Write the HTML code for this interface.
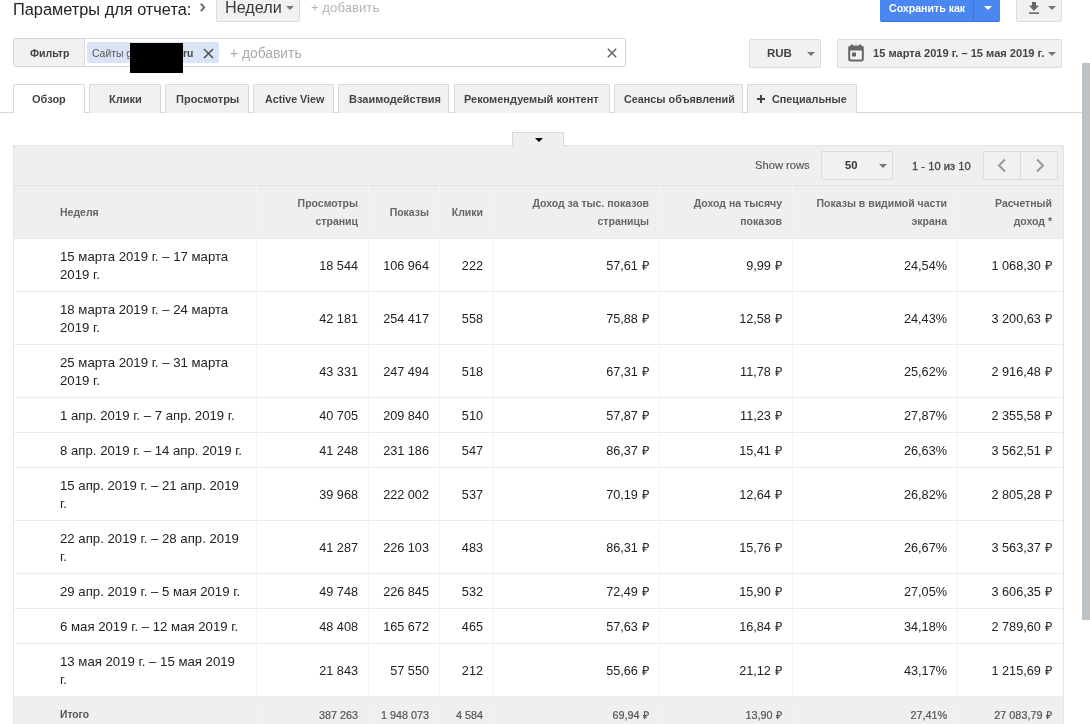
<!DOCTYPE html>
<html><head><meta charset="utf-8">
<style>
*{box-sizing:border-box;margin:0;padding:0}
html,body{width:1090px;height:724px;overflow:hidden;background:#fff;font-family:"Liberation Sans",sans-serif;color:#222;position:relative}
body{-webkit-font-smoothing:antialiased}
.t,table,.tab span{will-change:transform}
.a{position:absolute;white-space:nowrap}
.t{position:absolute;white-space:nowrap;line-height:1}
.btn{position:absolute;background:#f1f1f1;border:1px solid #dcdcdc;border-radius:2px}
.tab{position:absolute;top:84px;height:29px;background:#f1f1f1;border:1px solid #d9d9d9;border-bottom:none;border-radius:2px 2px 0 0}
.tab.on{background:#fff}
.tab span{position:absolute;top:9px;line-height:1;font-weight:bold;font-size:11px;color:#444;white-space:nowrap}
.tri{position:absolute;width:0;height:0;border-left:4px solid transparent;border-right:4px solid transparent;border-top:4px solid #777}
table{border-collapse:collapse;position:absolute;left:13px;top:185px;width:1050px;table-layout:fixed}
td,th{border:1px solid #f3f3f3;border-top-color:#ececec;border-bottom-color:#ececec;text-align:right;padding:0 10px;vertical-align:middle;white-space:nowrap}
tr>*:first-child{border-left-color:#e3e3e3}
tr>*:last-child{border-right-color:#e3e3e3;padding-right:11px}
th{background:#efefef;font-weight:bold;font-size:10.5px;color:#666;line-height:18px}
td{line-height:18px;color:#222;font-size:12.7px;padding-top:2px}
tr.tot td{padding-top:0;padding-bottom:0;-webkit-text-stroke:0.2px #555}
th{border-top-color:#e3e3e3}
td.w{text-align:left;padding-left:46px;font-size:13.2px}
tr.tot td{background:#efefef;font-size:10.8px;color:#555}
tr.tot td.w{font-weight:bold;font-size:10.3px;-webkit-text-stroke:0}
</style></head><body>
<!-- header row -->
<div class="t" style="left:13px;top:1px;font-size:16.35px;color:#222">Параметры для отчета:</div>
<svg class="a" style="left:199px;top:3px" width="8" height="10" viewBox="0 0 8 10"><path d="M1.8 0.6 L5.2 4.4 L1.8 8.2" fill="none" stroke="#6a6a6a" stroke-width="1.9"/></svg>
<div class="btn" style="left:216px;top:-3px;width:84px;height:25px"></div>
<div class="t" style="left:225px;top:-1px;font-size:16.2px;color:#3a3a3a">Недели</div>
<div class="tri" style="left:286px;top:6px;border-top-color:#777;border-left-width:4px;border-right-width:4px;border-top-width:4px"></div>
<div class="t" style="left:311px;top:1px;font-size:13.2px;color:#b5b5b5">+ добавить</div>
<div class="a" style="left:880px;top:-3px;width:120px;height:25px;background:#4a87f1;border-radius:2px;border-bottom:1px solid #3b70ec"></div>
<div class="a" style="left:973px;top:-3px;width:1px;height:25px;background:#3a6fee"></div>
<div class="t" style="left:889px;top:3px;font-size:10.6px;font-weight:bold;color:#fff">Сохранить как</div>
<div class="tri" style="left:984px;top:6px;border-top-color:#fff"></div>
<div class="btn" style="left:1016px;top:-3px;width:46px;height:25px"></div>
<svg class="a" style="left:1028px;top:2px" width="12" height="13" viewBox="0 0 12 13"><path d="M4 -1 H8 V3.5 H11 L6 9 L1 3.5 H4 Z" fill="#666"/><rect x="1" y="10.3" width="10" height="1.6" fill="#666"/></svg>
<div class="tri" style="left:1048px;top:6px;border-top-color:#777"></div>
<!-- filter bar -->
<div class="a" style="left:13px;top:38px;width:613px;height:29px;background:#fff;border:1px solid #d6d6d6;border-radius:2px"></div>
<div class="a" style="left:14px;top:39px;width:71px;height:27px;background:#f1f1f1;border-right:1px solid #dadada"></div>
<div class="t" style="left:30px;top:48px;font-size:10.6px;font-weight:bold;color:#444">Фильтр</div>
<div class="a" style="left:87px;top:42px;width:132px;height:21px;background:#dae4f7;border-radius:2px"></div>
<div class="t" style="left:92px;top:49px;font-size:10.4px;color:#555">Сайты g</div>
<div class="t" style="left:183px;top:49px;font-size:10.4px;font-weight:bold;color:#444">ru</div>
<svg class="a" style="left:203px;top:48px" width="11" height="11" viewBox="0 0 11 11"><path d="M1 1 L10 10 M10 1 L1 10" stroke="#555" stroke-width="1.6"/></svg>
<div class="a" style="left:130px;top:43px;width:53px;height:30px;background:#000"></div>
<div class="t" style="left:230px;top:47px;font-size:13.85px;color:#aaa">+ добавить</div>
<svg class="a" style="left:607px;top:48px" width="10" height="10" viewBox="0 0 10 10"><path d="M0.8 0.8 L9.2 9.2 M9.2 0.8 L0.8 9.2" stroke="#666" stroke-width="1.5"/></svg>
<div class="btn" style="left:749px;top:39px;width:72px;height:29px"></div>
<div class="t" style="left:767px;top:48px;font-size:11.5px;font-weight:bold;color:#444">RUB</div>
<div class="tri" style="left:807px;top:52px"></div>
<div class="btn" style="left:837px;top:39px;width:225px;height:29px"></div>
<svg class="a" style="left:848px;top:44px" width="16" height="18" viewBox="0 0 16 18"><rect x="3" y="0.5" width="2" height="3" fill="#666"/><rect x="11" y="0.5" width="2" height="3" fill="#666"/><rect x="1.2" y="2.5" width="13.6" height="14" rx="1.5" fill="none" stroke="#666" stroke-width="2"/><rect x="1.2" y="2.5" width="13.6" height="4" fill="#666"/><rect x="4" y="8.5" width="4" height="4" fill="#666"/></svg>
<div class="t" style="left:873px;top:48px;font-size:11.1px;font-weight:bold;color:#444">15 марта 2019 г. – 15 мая 2019 г.</div>
<div class="tri" style="left:1048px;top:52px"></div>
<!-- tabs -->
<div class="a" style="left:0;top:112px;width:1082px;height:1px;background:#d9d9d9"></div>
<div class="tab on" style="left:13px;width:72px"><span style="left:18px">Обзор</span></div>
<div class="tab" style="left:89px;width:72px"><span style="left:18.5px">Клики</span></div>
<div class="tab" style="left:165px;width:84px"><span style="left:9.5px">Просмотры</span></div>
<div class="tab" style="left:253px;width:81px"><span style="left:11px;font-size:10.7px">Active View</span></div>
<div class="tab" style="left:338px;width:111px"><span style="left:9.5px">Взаимодействия</span></div>
<div class="tab" style="left:454px;width:156px"><span style="left:9px">Рекомендуемый контент</span></div>
<div class="tab" style="left:614px;width:129px"><span style="left:9px;font-size:10.8px">Сеансы объявлений</span></div>
<div class="tab" style="left:747px;width:110px"><span style="left:24px;font-size:10.8px">Специальные</span></div>
<svg class="a" style="left:757px;top:95px" width="8" height="8" viewBox="0 0 8 8"><path d="M4 0 V8 M0 4 H8" stroke="#444" stroke-width="2"/></svg>
<!-- toolbar -->
<div class="a" style="left:13px;top:145px;width:1051px;height:41px;background:#efefef;border:1px solid #e3e3e3"></div>
<div class="a" style="left:512px;top:132px;width:52px;height:14px;background:#efefef;border:1px solid #d9d9d9;border-bottom:none"></div>
<div class="tri" style="left:535px;top:138px;border-top-color:#000;border-left-width:4px;border-right-width:4px;border-top-width:4px"></div>
<div class="t" style="left:755px;top:160px;font-size:11.2px;color:#555;-webkit-text-stroke:0.15px #555">Show rows</div>
<div class="btn" style="left:821px;top:151px;width:72px;height:29px;background:#f1f1f1"></div>
<div class="t" style="left:845px;top:160px;font-size:11.2px;font-weight:bold;color:#333">50</div>
<div class="tri" style="left:879px;top:164px"></div>
<div class="t" style="left:912px;top:161px;font-size:11.2px;color:#444;-webkit-text-stroke:0.3px #444">1 - 10 из 10</div>
<div class="btn" style="left:983px;top:151px;width:75px;height:29px;background:#f1f1f1"></div>
<div class="a" style="left:1020px;top:152px;width:1px;height:27px;background:#dcdcdc"></div>
<svg class="a" style="left:996px;top:158px" width="12" height="15" viewBox="0 0 12 15"><path d="M9 1.5 L3 7.5 L9 13.5" fill="none" stroke="#999" stroke-width="2"/></svg>
<svg class="a" style="left:1034px;top:158px" width="12" height="15" viewBox="0 0 12 15"><path d="M3 1.5 L9 7.5 L3 13.5" fill="none" stroke="#999" stroke-width="2"/></svg>
<!-- table -->
<table>
<colgroup><col style="width:243px"><col style="width:112px"><col style="width:71px"><col style="width:54px"><col style="width:166px"><col style="width:133px"><col style="width:165px"><col style="width:106px"></colgroup>
<tr style="height:53px"><th style="text-align:left;padding-left:46px">Неделя</th><th>Просмотры<br>страниц</th><th>Показы</th><th>Клики</th><th>Доход за тыс. показов<br>страницы</th><th>Доход на тысячу<br>показов</th><th>Показы в видимой части<br>экрана</th><th>Расчетный<br>доход *</th></tr>
<tr style="height:53px"><td class="w">15 марта 2019 г. – 17 марта<br>2019 г.</td><td>18 544</td><td>106 964</td><td>222</td><td>57,61 <span style="margin-left:0.6px">₽</span></td><td>9,99 <span style="margin-left:0.6px">₽</span></td><td>24,54%</td><td>1 068,30 <span style="margin-left:0.6px">₽</span></td></tr>
<tr style="height:53px"><td class="w">18 марта 2019 г. – 24 марта<br>2019 г.</td><td>42 181</td><td>254 417</td><td>558</td><td>75,88 <span style="margin-left:0.6px">₽</span></td><td>12,58 <span style="margin-left:0.6px">₽</span></td><td>24,43%</td><td>3 200,63 <span style="margin-left:0.6px">₽</span></td></tr>
<tr style="height:53px"><td class="w">25 марта 2019 г. – 31 марта<br>2019 г.</td><td>43 331</td><td>247 494</td><td>518</td><td>67,31 <span style="margin-left:0.6px">₽</span></td><td>11,78 <span style="margin-left:0.6px">₽</span></td><td>25,62%</td><td>2 916,48 <span style="margin-left:0.6px">₽</span></td></tr>
<tr style="height:35px"><td class="w">1 апр. 2019 г. – 7 апр. 2019 г.</td><td>40 705</td><td>209 840</td><td>510</td><td>57,87 <span style="margin-left:0.6px">₽</span></td><td>11,23 <span style="margin-left:0.6px">₽</span></td><td>27,87%</td><td>2 355,58 <span style="margin-left:0.6px">₽</span></td></tr>
<tr style="height:35px"><td class="w">8 апр. 2019 г. – 14 апр. 2019 г.</td><td>41 248</td><td>231 186</td><td>547</td><td>86,37 <span style="margin-left:0.6px">₽</span></td><td>15,41 <span style="margin-left:0.6px">₽</span></td><td>26,63%</td><td>3 562,51 <span style="margin-left:0.6px">₽</span></td></tr>
<tr style="height:53px"><td class="w">15 апр. 2019 г. – 21 апр. 2019<br>г.</td><td>39 968</td><td>222 002</td><td>537</td><td>70,19 <span style="margin-left:0.6px">₽</span></td><td>12,64 <span style="margin-left:0.6px">₽</span></td><td>26,82%</td><td>2 805,28 <span style="margin-left:0.6px">₽</span></td></tr>
<tr style="height:53px"><td class="w">22 апр. 2019 г. – 28 апр. 2019<br>г.</td><td>41 287</td><td>226 103</td><td>483</td><td>86,31 <span style="margin-left:0.6px">₽</span></td><td>15,76 <span style="margin-left:0.6px">₽</span></td><td>26,67%</td><td>3 563,37 <span style="margin-left:0.6px">₽</span></td></tr>
<tr style="height:35px"><td class="w">29 апр. 2019 г. – 5 мая 2019 г.</td><td>49 748</td><td>226 845</td><td>532</td><td>72,49 <span style="margin-left:0.6px">₽</span></td><td>15,90 <span style="margin-left:0.6px">₽</span></td><td>27,05%</td><td>3 606,35 <span style="margin-left:0.6px">₽</span></td></tr>
<tr style="height:35px"><td class="w">6 мая 2019 г. – 12 мая 2019 г.</td><td>48 408</td><td>165 672</td><td>465</td><td>57,63 <span style="margin-left:0.6px">₽</span></td><td>16,84 <span style="margin-left:0.6px">₽</span></td><td>34,18%</td><td>2 789,60 <span style="margin-left:0.6px">₽</span></td></tr>
<tr style="height:53px"><td class="w">13 мая 2019 г. – 15 мая 2019<br>г.</td><td>21 843</td><td>57 550</td><td>212</td><td>55,66 <span style="margin-left:0.6px">₽</span></td><td>21,12 <span style="margin-left:0.6px">₽</span></td><td>43,17%</td><td>1 215,69 <span style="margin-left:0.6px">₽</span></td></tr>
<tr class="tot" style="height:36px"><td class="w">Итого</td><td>387 263</td><td>1 948 073</td><td>4 584</td><td>69,94 <span style="margin-left:0.6px">₽</span></td><td>13,90 <span style="margin-left:0.6px">₽</span></td><td>27,41%</td><td>27 083,79 <span style="margin-left:0.6px">₽</span></td></tr>
</table>
<!-- scrollbar -->
<div class="a" style="left:1082px;top:63px;width:8px;height:557px;background:#bcc1c5"></div>
</body></html>
